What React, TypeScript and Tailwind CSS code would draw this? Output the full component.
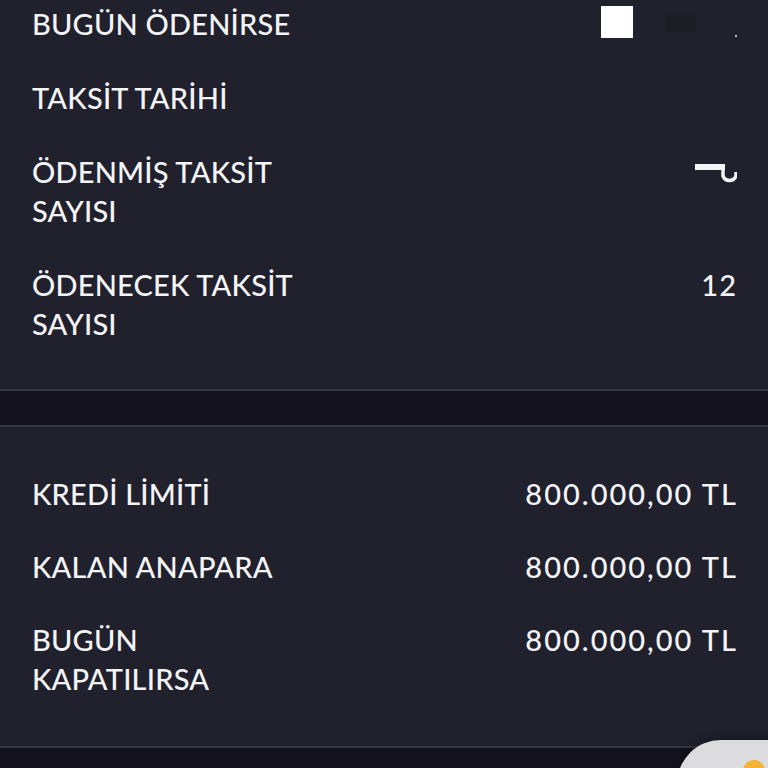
import React from "react";

const font = { fontFamily: "Lato, 'Noto Sans', sans-serif" };

function Row({ label, value, money }: { label: React.ReactNode; value?: React.ReactNode; money?: boolean }) {
  return (
    <div className="flex justify-between items-start">
      <div className="text-[29px] leading-[39px] font-medium text-[#f4f4f6] tracking-[0.2px]">{label}</div>
      <div
        className={
          money
            ? "text-[29px] leading-[39px] font-medium text-[#f4f4f6] text-right tracking-[2px] mr-[-2px]"
            : "text-[29px] leading-[39px] font-medium text-[#f4f4f6] text-right tracking-[1px] mr-[-1px]"
        }
      >
        {value}
      </div>
    </div>
  );
}

export default function App() {
  return (
    <div className="relative w-[768px] h-[768px] overflow-hidden bg-[#13121c]" style={font}>
      <div className="bg-[#20212d] px-8 pt-[4px] pb-[46px] flex flex-col gap-[35px] border-b-2 border-[#363644]">
        <div className="relative">
          <Row label="BUGÜN ÖDENİRSE" />
          <div className="absolute left-[569px] top-[2px] w-[32px] h-[32px] bg-white" />
          <div className="absolute left-[634px] top-[11px] w-[30px] h-[17px] bg-[#1d1d26]" />
          <div className="absolute left-[703px] top-[31px] w-[2px] h-[2px] bg-white/70" />
        </div>
        <Row label="TAKSİT TARİHİ" />
        <div className="flex justify-between items-start">
          <div className="text-[29px] leading-[39px] font-medium text-[#f4f4f6] tracking-[0.2px]">
            ÖDENMİŞ TAKSİT<br />SAYISI
          </div>
          <svg width="42" height="22" viewBox="0 0 42 22" className="block mt-[12px] mr-[-1px]">
            <rect x="0" y="0" width="30" height="6" fill="#f4f4f6" />
            <path d="M28 4 L28 12 A7 7 0 0 0 41 12 L41 8" stroke="#f4f4f6" strokeWidth="3.5" fill="none" />
          </svg>
        </div>
        <Row label={<>ÖDENECEK TAKSİT<br />SAYISI</>} value="12" />
      </div>
      <div className="h-[34px]" />
      <div className="bg-[#20212d] px-8 pt-[47px] pb-[48px] flex flex-col gap-[34px] border-t-2 border-b-2 border-[#363644]">
        <Row label="KREDİ LİMİTİ" value="800.000,00 TL" money />
        <Row label="KALAN ANAPARA" value="800.000,00 TL" money />
        <Row label={<>BUGÜN<br />KAPATILIRSA</>} value="800.000,00 TL" money />
      </div>
      <div className="absolute left-[677px] top-[740px] w-[130px] h-[90px] rounded-tl-[44px] bg-[#dcdcde] shadow-[0_0_8px_rgba(0,0,0,0.5)]">
        <div className="absolute left-[66px] top-[20px] w-[22px] h-[22px] rounded-full bg-[#f2b233]" />
      </div>
    </div>
  );
}
